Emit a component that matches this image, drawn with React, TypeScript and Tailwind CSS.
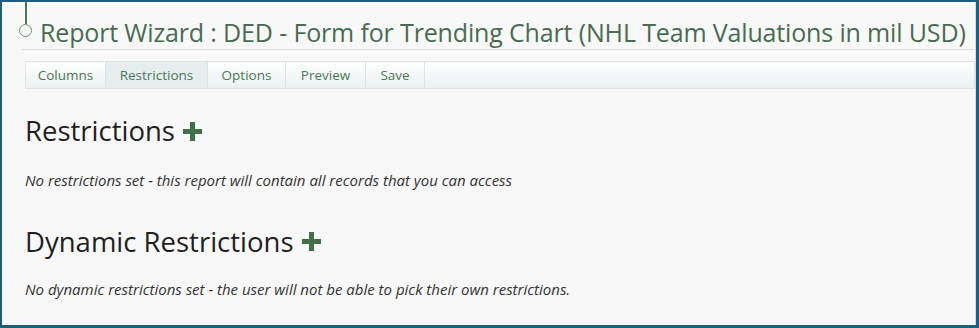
import React from "react";

const tabs = [
  { label: "Columns", w: "w-[80px]" },
  { label: "Restrictions", w: "w-[102px]" },
  { label: "Options", w: "w-[78px]" },
  { label: "Preview", w: "w-[80px]" },
  { label: "Save", w: "w-[59px]" },
];

const Plus = () => (
  <svg className="w-[19px] h-[19px]" viewBox="0 0 19 19">
    <path d="M7 0h5v7h7v5h-7v7H7v-7H0V7h7z" fill="#3f7047" />
  </svg>
);

const App: React.FC = () => {
  return (
    <div
      className="w-[979px] h-[328px] bg-[#1d5f7d] pl-[2px] pt-[2px] pr-[3px] pb-[3px]"
      style={{ fontFamily: '"Open Sans", "Noto Sans", sans-serif' }}
    >
      <div className="w-full h-full bg-[#f8f8f8] border-r border-[#dcdcdc] overflow-hidden">
        {/* Title */}
        <div className="ml-[20px] border-b border-[#dedede] flex items-end h-[48px]">
          <div className="flex flex-col items-center w-[13px] -ml-[3px] mr-[8px] self-stretch">
            <div className="w-[2px] h-[22px] bg-[#4e7359]" />
            <div className="w-[13px] h-[13px] rounded-full border-[1.5px] border-[#6e9079]" />
          </div>
          <h1 className="text-[25px] leading-[30px] text-[#4a6b53] pb-[2px] whitespace-nowrap tracking-[-0.15px]">
            Report Wizard : DED - Form for Trending Chart (NHL Team Valuations in mil USD)
          </h1>
        </div>

        {/* Tabs */}
        <div className="ml-[23px] mt-[11px] h-[28px] flex border border-[#e0e3e4] bg-gradient-to-b from-[#ffffff] to-[#eaf0f1]">
          {tabs.map((t) => (
            <div
              key={t.label}
              className={`${t.w} flex items-center justify-center text-[13.5px] text-[#4b7856] border-r border-[#dde2e3] ${
                t.label === "Restrictions" ? "bg-[#e6edef]" : ""
              }`}
            >
              {t.label}
            </div>
          ))}
        </div>

        {/* Content */}
        <div className="pl-[23px]">
          <div className="mt-[26px] flex items-center gap-[8px]">
            <h2 className="text-[27.5px] leading-[32px] text-[#1f1f1f]">Restrictions</h2>
            <Plus />
          </div>
          <p className="mt-[22px] text-[15px] italic text-[#333]">
            No restrictions set - this report will contain all records that you can access
          </p>

          <div className="mt-[34px] flex items-center gap-[8px]">
            <h2 className="text-[27.5px] leading-[32px] text-[#1f1f1f]">Dynamic Restrictions</h2>
            <Plus />
          </div>
          <p className="mt-[20px] text-[15px] italic text-[#333]">
            No dynamic restrictions set - the user will not be able to pick their own restrictions.
          </p>
        </div>
      </div>
    </div>
  );
};

export default App;
